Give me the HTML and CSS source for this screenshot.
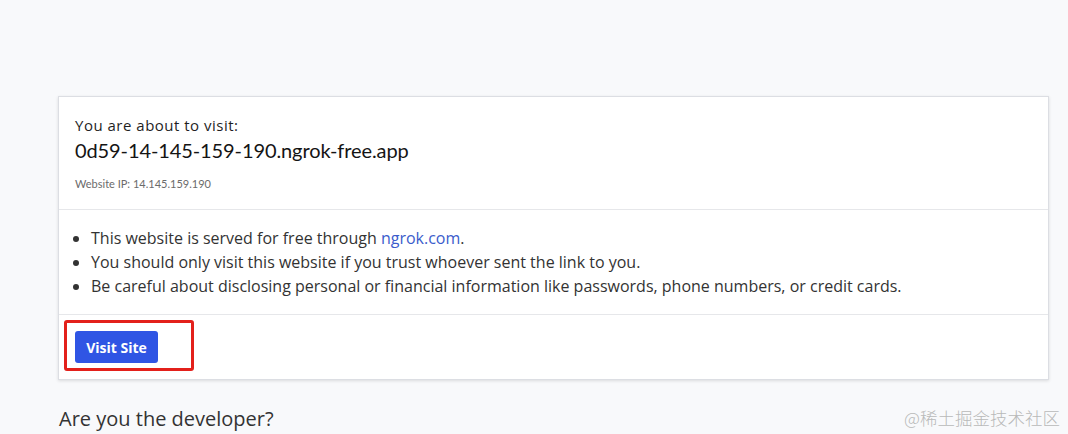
FILE: index.html
```html
<!DOCTYPE html>
<html lang="en">
<head>
<meta charset="utf-8">
<title>ngrok - Visit Site</title>
<link rel="stylesheet" href="styles.css">
</head>
<body>
<main class="page">
  <section class="card">
    <div class="card-section intro">
      <p class="about">You are about to visit:</p>
      <p class="domain">0d59-14-145-159-190.ngrok-free.app</p>
      <p class="ip">Website IP: 14.145.159.190</p>
    </div>
    <div class="card-section notes">
      <ul class="warn-list">
        <li>This website is served for free through <a href="#" class="link">ngrok.com</a>.</li>
        <li>You should only visit this website if you trust whoever sent the link to you.</li>
        <li>Be careful about disclosing personal or financial information like passwords, phone numbers, or credit cards.</li>
      </ul>
    </div>
    <div class="card-section actions">
      <button class="visit-btn" type="button">Visit Site</button>
      <span class="highlight-box"></span>
    </div>
  </section>
  <h2 class="dev-title">Are you the developer?</h2>
</main>
<div class="watermark">@稀土掘金技术社区</div>
</body>
</html>
```

FILE: styles.css
```css
html, body {
  margin: 0;
  padding: 0;
}
body {
  background: #f8f9fb;
  font-family: "Open Sans", "Liberation Sans", sans-serif;
  color: #1f1f1f;
  height: 434px;
  overflow: hidden;
  position: relative;
}
.page {
  width: 991px;
  margin: 0 0 0 58px;
  padding-top: 96px;
}
.card {
  background: #fff;
  border: 1px solid #dcdee3;
  box-shadow: 0 1px 3px rgba(0, 0, 0, 0.12);
}
.card-section {
  padding: 16px 16px;
}
.card-section + .card-section {
  border-top: 1px solid #e6e7ea;
}
.intro {
  padding-top: 18px;
  padding-bottom: 17px;
}
.intro p {
  margin: 0;
}
.about {
  font-size: 15px;
  line-height: 20px;
  letter-spacing: 0.5px;
  font-weight: 500;
  color: #1f1f1f;
}
.domain {
  font-family: "Lato", "Liberation Sans", sans-serif;
  font-size: 20px;
  line-height: 28px;
  letter-spacing: -0.1px;
  color: #141414;
  margin-top: 1px !important;
}
.ip {
  font-family: "Lato", "Liberation Sans", sans-serif;
  font-size: 11px;
  line-height: 16px;
  color: #6b6b6b;
  margin-top: 12px !important;
}
.notes {
  padding-top: 16px;
  padding-bottom: 16px;
}
.warn-list {
  margin: 0;
  padding-left: 16px;
  font-size: 16px;
  line-height: 24px;
  letter-spacing: 0;
  color: #333;
}
.link {
  color: #3b5ccc;
  text-decoration: none;
}
.actions {
  position: relative;
  padding-top: 16px;
  padding-bottom: 16px;
}
.visit-btn {
  display: block;
  height: 32px;
  width: 83px;
  border: none;
  border-radius: 3px;
  background: #2f55e4;
  color: #fff;
  font-family: "Open Sans", "Liberation Sans", sans-serif;
  font-size: 14px;
  font-weight: 700;
  letter-spacing: 0;
  padding: 0;
}
.highlight-box {
  position: absolute;
  left: 5px;
  top: 5px;
  width: 124px;
  height: 45px;
  border: 3px solid #e3201b;
  border-radius: 3px;
}
.dev-title {
  margin: 27px 0 0 1px;
  font-size: 20px;
  line-height: 24px;
  font-weight: 400;
  color: #333;
}
.watermark {
  position: absolute;
  right: 8px;
  top: 406px;
  font-family: "Noto Sans CJK SC", sans-serif;
  font-size: 17.5px;
  line-height: 24px;
  color: #b9b9b9;
  font-weight: 300;
}
```
